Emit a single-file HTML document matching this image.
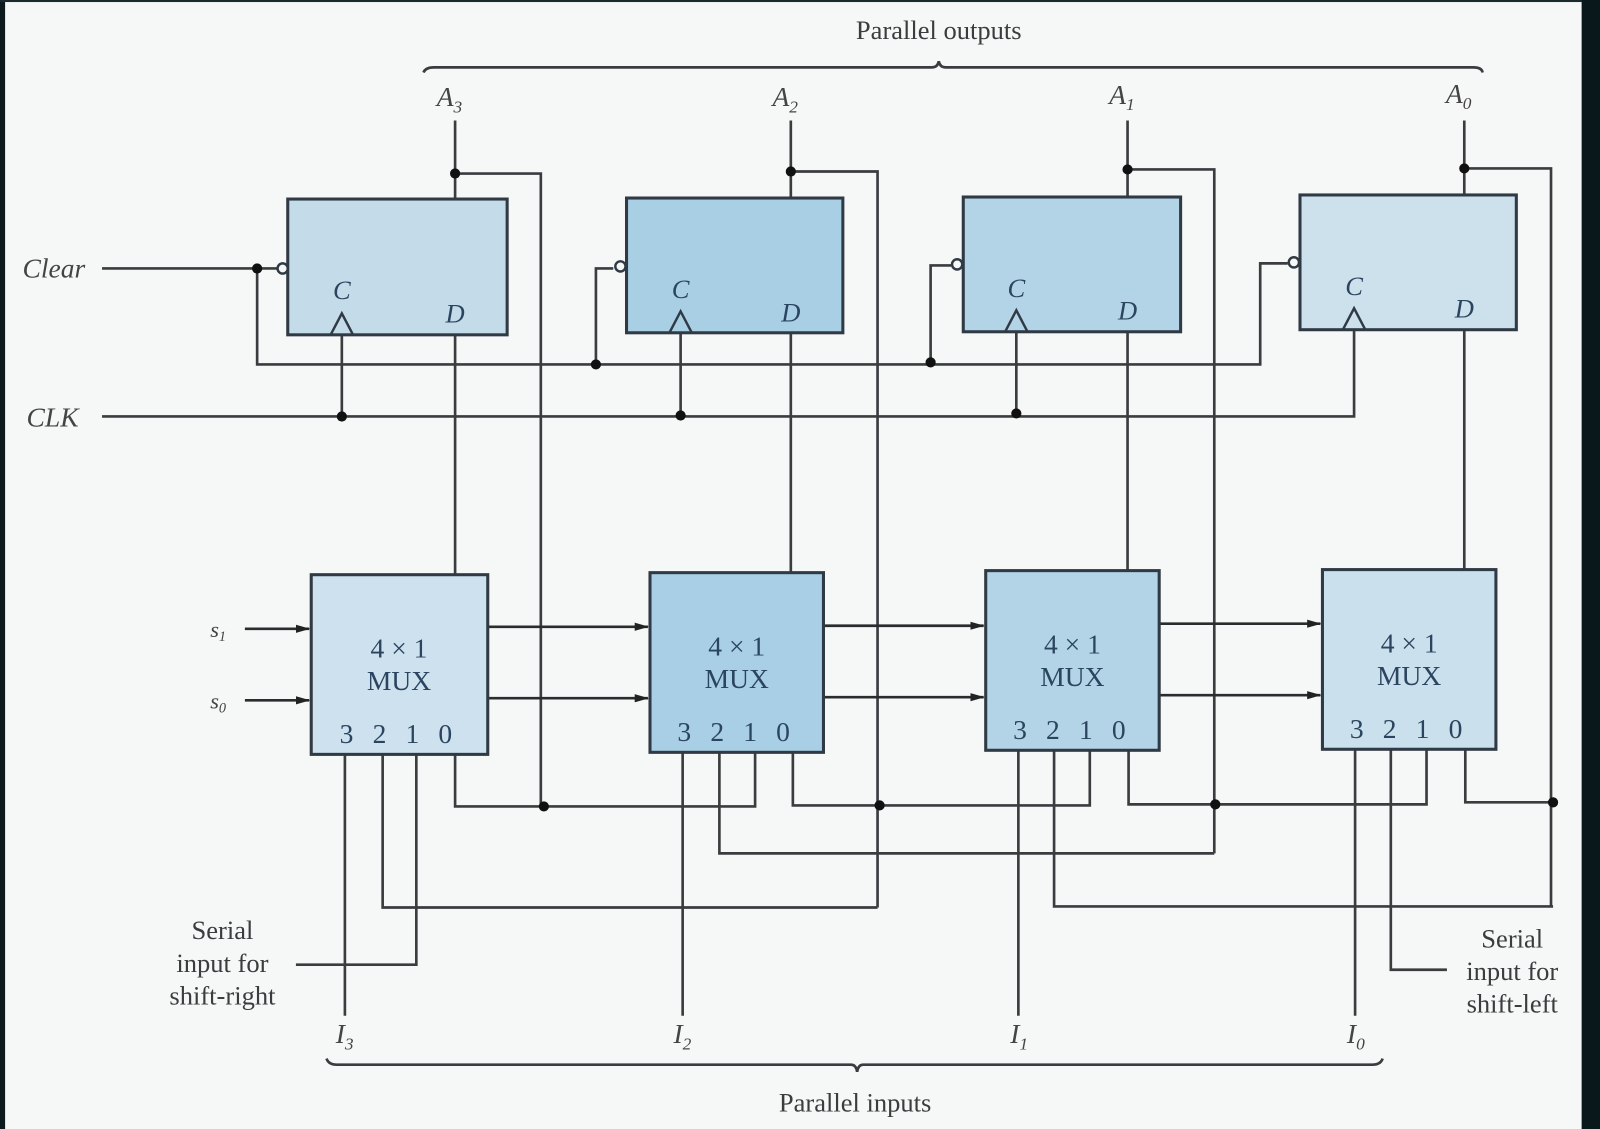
<!DOCTYPE html>
<html><head><meta charset="utf-8"><style>
html,body{margin:0;padding:0;background:#f6f7f7;}
svg{display:block;}
text{font-family:"Liberation Serif",serif;}
</style></head><body>
<svg width="1600" height="1129" viewBox="0 0 1568 1106" preserveAspectRatio="none" xmlns="http://www.w3.org/2000/svg">
<rect x="0" y="0" width="1568" height="1106" fill="#f6f7f7"/>
<rect x="0" y="0" width="5" height="1106" fill="#0c1a1e"/>
<rect x="0" y="0" width="1568" height="2" fill="#1a2a2e"/>
<rect x="1550" y="0" width="18" height="1106" fill="#08181b"/>
<defs>
<marker id="ar" markerWidth="14" markerHeight="10" refX="13" refY="5" orient="auto" markerUnits="userSpaceOnUse"><path d="M0,1 L14,5 L0,9 Z" fill="#222"/></marker>
</defs>
<g fill="none" stroke="#3a3d40" stroke-width="2.6">
<!-- top brace -->
<path d="M415,71 Q417,66 425,66 L913,66 Q919,66 920,60 Q921,66 927,66 L1444,66 Q1452,66 1453,71"/>
<!-- bottom brace -->
<path d="M320,1037 Q322,1043 330,1043 L834,1043 Q839,1043 840,1050 Q841,1043 846,1043 L1345,1043 Q1353,1043 1355,1037"/>
<!-- A outputs -->
<path d="M446,118 V195 M775,118 V194 M1105,118 V193 M1435,118 V191"/>
<!-- feedback -->
<path d="M446,170 H530 V790 M775,168 H860 V889 M1105,166 H1190 V836 M1435,165 H1520 V888"/>
<!-- Clear -->
<path d="M100,263 H272 M252,263 V357 H1235 V258 H1262 M584,357 V263 H601 M912,355 V260 H932"/>
<!-- CLK -->
<path d="M100,408 H1327 V323 M335,408 V328 M667,408 V326 M996,408 V325"/>
<!-- D to MUX -->
<path d="M446,328 V563 M775,326 V561 M1105,325 V559 M1435,323 V558"/>
<!-- mux bottom wiring -->
<path d="M446,739 V790 H740 V737 M777,737 V789 H1068 V735 M1106,735 V788 H1398 V734 M1436,734 V786 H1522"/>
<path d="M705,737 V836 H1190 M375,739 V889 H860 M1033,735 V888 H1522 M408,739 V945 H290 M1363,734 V950 H1418"/>
<path d="M338,739 V995 M669,737 V995 M998,735 V995 M1328,734 V995"/>
</g>
<g stroke="#2a2d30" stroke-width="2.6" fill="none" marker-end="url(#ar)">
<path d="M240,616 H303"/><path d="M240,686 H303"/>
<path d="M478,614 H635"/><path d="M478,684 H635"/>
<path d="M807,613 H964"/><path d="M807,683 H964"/>
<path d="M1136,611 H1294"/><path d="M1136,681 H1294"/>
</g>
<!-- FF boxes -->
<g stroke="#2f3a44" stroke-width="3">
<rect x="282" y="195" width="215" height="133" fill="#c4dcea"/>
<rect x="614" y="194" width="212" height="132" fill="#a9cfe5"/>
<rect x="944" y="193" width="213" height="132" fill="#b3d4e7"/>
<rect x="1274" y="191" width="212" height="132" fill="#cde1ed"/>
<rect x="305" y="563" width="173" height="176" fill="#cde2ee"/>
<rect x="637" y="561" width="170" height="176" fill="#a9cfe6"/>
<rect x="966" y="559" width="170" height="176" fill="#b3d4e7"/>
<rect x="1296" y="558" width="170" height="176" fill="#cbe0ed"/>
</g>
<g fill="none" stroke="#2f3a44" stroke-width="2.4">
<path d="M324,328 L335,307 L346,328"/><path d="M656,326 L667,305 L678,326"/>
<path d="M985,325 L996,304 L1007,325"/><path d="M1316,323 L1327,302 L1338,323"/>
<circle cx="277" cy="263" r="5" fill="#f6f7f7"/><circle cx="608" cy="261" r="5" fill="#f6f7f7"/>
<circle cx="938" cy="259" r="5" fill="#f6f7f7"/><circle cx="1268" cy="257" r="5" fill="#f6f7f7"/>
</g>
<g fill="#111">
<circle cx="446" cy="170" r="5"/><circle cx="775" cy="168" r="5"/><circle cx="1105" cy="166" r="5"/><circle cx="1435" cy="165" r="5"/>
<circle cx="252" cy="263" r="5"/><circle cx="584" cy="357" r="5"/><circle cx="912" cy="355" r="5"/>
<circle cx="335" cy="408" r="5"/><circle cx="667" cy="407" r="5"/><circle cx="996" cy="405" r="5"/>
<circle cx="533" cy="790" r="5"/><circle cx="862" cy="789" r="5"/><circle cx="1191" cy="788" r="5"/><circle cx="1522" cy="786" r="5"/>
</g>
<g fill="#2b4560" font-size="26" font-style="italic" text-anchor="middle">
<text x="335" y="293">C</text><text x="446" y="316">D</text>
<text x="667" y="292">C</text><text x="775" y="315">D</text>
<text x="996" y="291">C</text><text x="1105" y="313">D</text>
<text x="1327" y="289">C</text><text x="1435" y="311">D</text>
</g>
<g fill="#2b4560" font-size="27" text-anchor="middle">
<text x="391" y="644">4 × 1</text><text x="391" y="676">MUX</text><text x="391" y="728" letter-spacing="6">3 2 1 0</text>
<text x="722" y="642">4 × 1</text><text x="722" y="674">MUX</text><text x="722" y="726" letter-spacing="6">3 2 1 0</text>
<text x="1051" y="640">4 × 1</text><text x="1051" y="672">MUX</text><text x="1051" y="724" letter-spacing="6">3 2 1 0</text>
<text x="1381" y="639">4 × 1</text><text x="1381" y="671">MUX</text><text x="1381" y="723" letter-spacing="6">3 2 1 0</text>
</g>
<g fill="#3a3c3e" font-size="26" text-anchor="middle">
<text x="920" y="38">Parallel outputs</text>
<text x="838" y="1089">Parallel inputs</text>
<text x="218" y="920">Serial</text><text x="218" y="952">input for</text><text x="218" y="984">shift-right</text>
<text x="1482" y="928">Serial</text><text x="1482" y="960">input for</text><text x="1482" y="992">shift-left</text>
</g>
<g fill="#444" font-size="27" font-style="italic">
<text x="22" y="272">Clear</text><text x="26" y="418">CLK</text>
<text x="428" y="104">A<tspan font-size="17" dy="6">3</tspan></text>
<text x="757" y="104">A<tspan font-size="17" dy="6">2</tspan></text>
<text x="1087" y="102">A<tspan font-size="17" dy="6">1</tspan></text>
<text x="1417" y="101">A<tspan font-size="17" dy="6">0</tspan></text>
<text x="206" y="624" font-size="22">s<tspan font-size="14" dy="4">1</tspan></text>
<text x="206" y="694" font-size="22">s<tspan font-size="14" dy="4">0</tspan></text>
<text x="329" y="1022">I<tspan font-size="17" dy="6">3</tspan></text>
<text x="660" y="1022">I<tspan font-size="17" dy="6">2</tspan></text>
<text x="990" y="1022">I<tspan font-size="17" dy="6">1</tspan></text>
<text x="1320" y="1022">I<tspan font-size="17" dy="6">0</tspan></text>
</g>
</svg>
</body></html>
